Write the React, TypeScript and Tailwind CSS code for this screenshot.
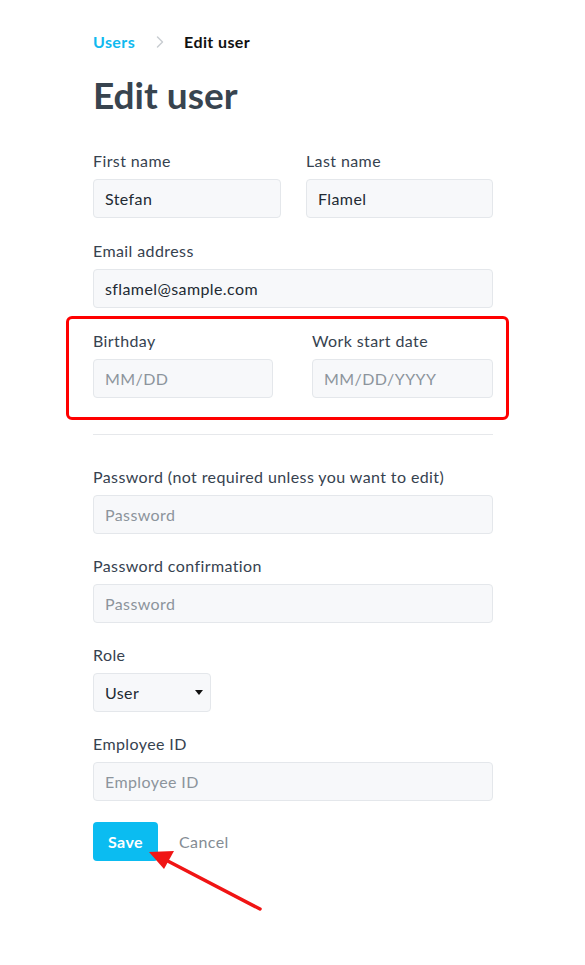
import { ChevronRight } from "lucide-react";

const Field = ({
  label,
  value,
  placeholder,
}: {
  label: string;
  value?: string;
  placeholder?: string;
}) => (
  <div className="flex flex-col">
    <label className="h-6 text-[16px] leading-6 text-[#36424f]">{label}</label>
    <div className="mt-1.5 flex h-[39px] items-center rounded-[4px] border border-[#e4e7eb] bg-[#f7f8fa] px-[11px] text-[16px]">
      {value ? (
        <span className="text-[#222a33]">{value}</span>
      ) : (
        <span className="text-[#8c949c]">{placeholder}</span>
      )}
    </div>
  </div>
);

const App = () => {
  return (
    <div className="relative min-h-[965px] w-[585px] bg-white font-['Lato',sans-serif] tracking-[0.4px]">
      <div className="ml-[93px] w-[400px] pt-[30px]">
        {/* Breadcrumb */}
        <div className="flex h-6 items-center text-[16px] font-bold leading-6">
          <span className="text-[#10b9ef]">Users</span>
          <ChevronRight className="ml-[15px] mr-[14px] h-5 w-5 text-[#c9cdd2]" strokeWidth={1.75} />
          <span className="text-[#111]">Edit user</span>
        </div>

        <h1 className="mt-[17px] h-12 text-[37px] font-bold leading-[48px] tracking-normal text-[#38444f]">
          Edit user
        </h1>

        <div className="mt-[30px] flex flex-col gap-[21px]">
          <div className="grid grid-cols-[188px_187px] gap-[25px]">
            <Field label="First name" value="Stefan" />
            <Field label="Last name" value="Flamel" />
          </div>
          <Field label="Email address" value="sflamel@sample.com" />

          <div className="relative">
            <div className="grid grid-cols-[180px_181px] gap-[39px]">
              <Field label="Birthday" placeholder="MM/DD" />
              <Field label="Work start date" placeholder="MM/DD/YYYY" />
            </div>
            {/* annotation box */}
            <div className="pointer-events-none absolute left-[-27px] top-[-13px] h-[104px] w-[443px] rounded-[6px] border-[3px] border-[#ff0000]" />
          </div>
        </div>

        <div className="mt-[36px] h-px bg-[#e6e8eb]" />

        <div className="mt-[30px] flex flex-col gap-[20px]">
          <Field label="Password (not required unless you want to edit)" placeholder="Password" />
          <Field label="Password confirmation" placeholder="Password" />

          <div className="flex flex-col">
            <label className="h-6 text-[16px] leading-6 text-[#36424f]">Role</label>
            <div className="mt-1.5 flex h-[39px] w-[118px] items-center justify-between rounded-[4px] border border-[#e4e7eb] bg-[#f7f8fa] pl-[11px] pr-[7px] text-[16px] text-[#222a33]">
              <span>User</span>
              <svg width="8" height="5" viewBox="0 0 8 5">
                <path d="M0 0h8L4 5z" fill="#111" />
              </svg>
            </div>
          </div>

          <Field label="Employee ID" placeholder="Employee ID" />
        </div>

        <div className="mt-[21px] flex items-center">
          <button className="h-[39px] w-[65px] rounded-[4px] bg-[#0bbcf1] text-[16px] font-bold text-white">
            Save
          </button>
          <span className="ml-[21px] text-[16px] text-[#848c94]">Cancel</span>
        </div>
      </div>

      {/* annotation arrow */}
      <svg
        className="pointer-events-none absolute left-0 top-0"
        width="585"
        height="965"
        viewBox="0 0 585 965"
      >
        <line x1="260" y1="909" x2="162" y2="858" stroke="#f01414" strokeWidth="3.5" strokeLinecap="round" />
        <path d="M149 852 L174 851 L164 869 Z" fill="#f01414" />
      </svg>
    </div>
  );
};

export default App;
